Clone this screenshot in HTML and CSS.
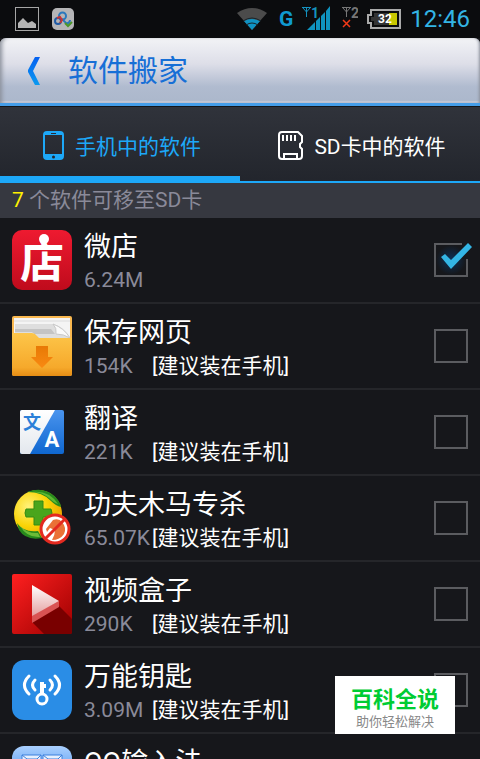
FILE: index.html
```
<!DOCTYPE html>
<html lang="zh-CN">
<head>
    <meta charset="UTF-8">
    <meta name="viewport" content="width=device-width, initial-scale=1.0">
    <title>软件搬家</title>
    <link rel="stylesheet" href="styles.css">
</head>
<body>
    <div class="status-bar">
        <div class="status-left">
            <svg width="24" height="24" viewBox="0 0 24 24">
                <rect x="0.5" y="0.5" width="23" height="23" fill="none" stroke="#a6a6a6"/>
                <path d="M3 21v-5l5-5 5 5 4-2 4 3v4z" fill="#b4b4b4"/>
            </svg>
            <svg width="22" height="22" viewBox="0 0 22 22">
                <rect width="22" height="22" rx="5" fill="#b5b5b7"/>
                <circle cx="10.500" cy="8" r="3.500" fill="none" stroke="#2a78bd" stroke-width="2"/>
                <circle cx="6" cy="13" r="3" fill="none" stroke="#1f5aa5" stroke-width="2"/>
                <path d="M10 11l4 4c2 1 4-1 4-3" fill="none" stroke="#2a78bd" stroke-width="2"/>
                <path d="M5 10l3-1 2 3-2 3" fill="none" stroke="#c73535" stroke-width="2"/>
                <path d="M13 15l3 3 4-4" fill="none" stroke="#4b9628" stroke-width="2"/>
            </svg>
        </div>
        <div class="status-right">
            <svg width="30" height="22" viewBox="0 0 30 22">
                <path d="M15 22L0 5Q15-5 30 5z" fill="#4b4b4b"/>
                <path d="M15 22L7 13q8-4 16 0z" fill="#0f93c4"/>
                <path d="M6 13q9-6 18 0M9 17q6-4 12 0" fill="none" stroke="#17242b" stroke-width="1"/>
            </svg>
            <span class="network">G</span>
            <svg class="signal first" width="28" height="24" viewBox="0 0 28 24">
                <path d="M0 1.500h9M4.500 1v10M1 2l3.500 4L8 2" fill="none" stroke="#1492bf"/>
                <path d="M5 24l8-8v8zM14 24v-9l4-4v13zM19 24V10l4-4v18zM24 24V5l4-5v24z" fill="#0f93bf"/>
                <text x="9" y="12" fill="#1492bf">1</text>
            </svg>
            <svg class="signal" width="16" height="24" viewBox="0 0 16 24">
                <path d="M0 1.500h9M4.500 1v10M1 2l3.500 4L8 2" fill="none" stroke="#777"/>
                <path d="M1 14l7 7M8 14l-7 7" stroke="#f33a18" stroke-width="1.500"/>
                <text x="9" y="12" fill="#777">2</text>
            </svg>
            <svg class="battery" width="34" height="20" viewBox="0 0 34 20">
                <path d="M4 1h29v18H4v-5H1V6h3z" fill="#0b0c0e" stroke="#aaa" stroke-width="2"/>
                <path d="M7 4h15v12H7v-4H4V8h3z" fill="#333"/>
                <path d="M22 4h8v12h-8z" fill="#c8c800"/>
                <text x="18" y="14" text-anchor="middle" fill="#fff">32</text>
            </svg>
            <span class="clock">12:46</span>
        </div>
    </div>

    <header class="header">
        <button class="back" aria-label="返回">
            <svg width="12" height="28" viewBox="0 0 12 28">
                <defs>
                    <linearGradient id="backFill" x1="0" y1="0" x2="0" y2="1">
                        <stop offset="0" stop-color="#0560f0"/>
                        <stop offset="1" stop-color="#0b9af0"/>
                    </linearGradient>
                </defs>
                <path d="M7 0h5L5 14l7 14H7L0 15v-2z" fill="url(#backFill)"/>
            </svg>
        </button>
        <h1>软件搬家</h1>
    </header>

    <nav class="tabs">
        <a href="#phone" class="tab active">
            <svg width="21" height="29" viewBox="0 0 21 29">
                <path d="M4 0h13q4 0 4 4v21q0 4-4 4H4q-4 0-4-4V4q0-4 4-4zM2 4v19h17V4zM8 2v1h5V2z" fill="#1da8f8" fill-rule="evenodd"/>
                <circle cx="10.500" cy="26" r="1.500" fill="#25282f"/>
            </svg>
            <span>手机中的软件</span>
        </a>
        <a href="#sdcard" class="tab">
            <svg width="25" height="29" viewBox="0 0 25 29">
                <path d="M4 1h16l4 4v6l-2 2v3l2 2v7q0 3-3 3H4q-3 0-3-3V4q0-3 3-3zM6 28v-5h13v5" fill="none" stroke="#fff" stroke-width="2"/>
                <path d="M5 4v6M9 4v6M13 4v6M17 4v6" stroke="#fff" stroke-width="2"/>
            </svg>
            <span>SD卡中的软件</span>
        </a>
    </nav>

    <p class="summary"><b>7</b> 个软件可移至SD卡</p>

    <ul class="app-list">
        <li class="app">
            <svg class="app-icon" viewBox="0 0 60 60">
                <defs>
                    <linearGradient id="shopFill" x1="0" y1="0" x2="0" y2="1">
                        <stop offset="0" stop-color="#ee1a30"/>
                        <stop offset="1" stop-color="#bf0b1c"/>
                    </linearGradient>
                </defs>
                <rect width="60" height="60" rx="10" fill="url(#shopFill)"/>
                <text class="shop-text" x="30" y="48" text-anchor="middle" fill="#fff">店</text>
                <circle cx="32" cy="9" r="5" fill="#fff"/>
            </svg>
            <label class="app-info" for="app1">
                <span class="name">微店</span>
                <span class="meta"><span class="size">6.24M</span></span>
            </label>
            <input type="checkbox" id="app1" checked>
        </li>
        <li class="app">
            <svg class="app-icon" viewBox="0 0 60 60">
                <defs>
                    <linearGradient id="folderFill" x1="0" y1="0" x2="0" y2="1">
                        <stop offset="0" stop-color="#fdc64a"/>
                        <stop offset="0.800" stop-color="#f6a92b"/>
                        <stop offset="1" stop-color="#e58c14"/>
                    </linearGradient>
                    <linearGradient id="arrowFill" x1="0" y1="0" x2="0" y2="1">
                        <stop offset="0" stop-color="#e87905"/>
                        <stop offset="1" stop-color="#f98a12"/>
                    </linearGradient>
                </defs>
                <rect width="60" height="60" rx="2" fill="#f9b850"/>
                <path d="M2 2h56v24H2z" fill="#f4f4f4"/>
                <path d="M2 5h56" stroke="#dcdcdc"/>
                <path d="M3 8h38q10 2 17 13v3H26l-4-7H3z" fill="#dedede"/>
                <path d="M3 13h36l4 5H22l-2-2H3z" fill="#c4c4c4"/>
                <path d="M41 8q11 4 17 14-6-4-14-4 1-6-3-10z" fill="#fafafa" stroke="#c9c9c9"/>
                <path d="M0 17h20q3 0 5 3l2 2h33v36q0 2-2 2H2q-2 0-2-2z" fill="url(#folderFill)"/>
                <path d="M24 30h12v11h5L30 52 19 41h5z" fill="url(#arrowFill)"/>
            </svg>
            <label class="app-info" for="app2">
                <span class="name">保存网页</span>
                <span class="meta"><span class="size">154K</span><span class="hint">[建议装在手机]</span></span>
            </label>
            <input type="checkbox" id="app2">
        </li>
        <li class="app">
            <svg class="app-icon" viewBox="0 0 60 60">
                <defs>
                    <linearGradient id="blueFill" x1="0" y1="0" x2="0" y2="1">
                        <stop offset="0" stop-color="#4a94ee"/>
                        <stop offset="1" stop-color="#0f67d0"/>
                    </linearGradient>
                    <linearGradient id="paperFill" x1="0" y1="0" x2="0" y2="1">
                        <stop offset="0" stop-color="#fff"/>
                        <stop offset="1" stop-color="#e3e7ed"/>
                    </linearGradient>
                </defs>
                <rect x="8" y="8" width="44" height="44" rx="2" fill="url(#blueFill)"/>
                <path d="M10 8h33L18 52h-8q-2 0-2-2V10q0-2 2-2z" fill="url(#paperFill)"/>
                <text class="wen-text" x="20" y="27" text-anchor="middle" fill="#2b80d8">文</text>
                <text class="a-text" x="40" y="45" text-anchor="middle" fill="#fff">A</text>
            </svg>
            <label class="app-info" for="app3">
                <span class="name">翻译</span>
                <span class="meta"><span class="size">221K</span><span class="hint">[建议装在手机]</span></span>
            </label>
            <input type="checkbox" id="app3">
        </li>
        <li class="app">
            <svg class="app-icon" viewBox="0 0 60 60">
                <defs>
                    <radialGradient id="ballFill" cx="0.300" cy="0.350" r="0.800">
                        <stop offset="0" stop-color="#fff27a"/>
                        <stop offset="0.500" stop-color="#fad406"/>
                        <stop offset="1" stop-color="#e99c00"/>
                    </radialGradient>
                </defs>
                <circle cx="26" cy="26" r="24" fill="url(#ballFill)"/>
                <path d="M15 4Q34-3 46 12q3 4 3 7-5-1-10-6-8-9-24-9z" fill="#278a1c"/>
                <path d="M20 4q17-2 26 12-4-1-9-6-7-6-17-6z" fill="#5fb933"/>
                <path d="M5 35q7 10 21 8l4 7Q14 53 7 42z" fill="#278a1c"/>
                <path d="M8 38q8 8 18 7l2 4Q15 50 8 38z" fill="#6bbb38"/>
                <path d="M22 13h9v8h8q2 4 0 8h-8v8h-9v-8h-8q-2-4 0-8h8z" fill="#4aa51c" stroke="#358b12"/>
                <circle cx="43" cy="41" r="14" fill="#fff" stroke="#e32a20" stroke-width="3"/>
                <path d="M34 41l7-9q6-2 9 2 5 6 2 12-4 6-12 6 3-5 3-10l-5-2-3 4z" fill="#ea7136"/>
                <path d="M33 51l20-20" stroke="#e32a20" stroke-width="3"/>
            </svg>
            <label class="app-info" for="app4">
                <span class="name">功夫木马专杀</span>
                <span class="meta"><span class="size">65.07K</span><span class="hint">[建议装在手机]</span></span>
            </label>
            <input type="checkbox" id="app4">
        </li>
        <li class="app">
            <svg class="app-icon" viewBox="0 0 60 60">
                <defs>
                    <linearGradient id="videoFill" x1="0" y1="0" x2="1" y2="1">
                        <stop offset="0" stop-color="#ff2020"/>
                        <stop offset="1" stop-color="#9c0000"/>
                    </linearGradient>
                    <linearGradient id="playFill" x1="0" y1="0" x2="0" y2="1">
                        <stop offset="0" stop-color="#fff"/>
                        <stop offset="1" stop-color="#e5a0a0"/>
                    </linearGradient>
                </defs>
                <rect width="60" height="60" rx="2" fill="url(#videoFill)"/>
                <path d="M20 48l27-16 13 13v13q0 2-2 2H32z" fill="#790000"/>
                <path d="M20 41l27-14v6L20 49z" fill="#d95353"/>
                <path d="M20 11l27 16-27 15z" fill="url(#playFill)"/>
            </svg>
            <label class="app-info" for="app5">
                <span class="name">视频盒子</span>
                <span class="meta"><span class="size">290K</span><span class="hint">[建议装在手机]</span></span>
            </label>
            <input type="checkbox" id="app5">
        </li>
        <li class="app">
            <svg class="app-icon" viewBox="0 0 60 60">
                <rect width="60" height="60" rx="12" fill="#2a8de6"/>
                <g fill="none" stroke="#fff" stroke-width="3" stroke-linecap="round">
                    <circle cx="30" cy="39" r="5"/>
                    <path d="M30 34V22M30 26h4" stroke-linecap="butt" stroke-width="4"/>
                    <path d="M23 20q-5 5 0 10M17 16q-9 9 0 18M38 20q5 5 0 10M43 16q9 9 0 18"/>
                </g>
            </svg>
            <label class="app-info" for="app6">
                <span class="name">万能钥匙</span>
                <span class="meta"><span class="size">3.09M</span><span class="hint">[建议装在手机]</span></span>
            </label>
            <input type="checkbox" id="app6">
        </li>
        <li class="app">
            <svg class="app-icon" viewBox="0 0 60 60">
                <defs>
                    <linearGradient id="keysFill" x1="0" y1="0" x2="0" y2="1">
                        <stop offset="0" stop-color="#a9d0ff"/>
                        <stop offset="0.500" stop-color="#5598ee"/>
                    </linearGradient>
                </defs>
                <rect width="60" height="60" rx="12" fill="url(#keysFill)"/>
                <path d="M10 9h19v16H10zM31 9h19v16H31z" fill="#e5f0ff" stroke="#3d80dd"/>
                <path d="M10 9l5 4h10l4-4M31 9l5 4h10l4-4" fill="none" stroke="#3d80dd"/>
            </svg>
            <label class="app-info" for="app7">
                <span class="name">QQ输入法</span>
            </label>
            <input type="checkbox" id="app7">
        </li>
    </ul>

    <div class="watermark">
        <strong>百科全说</strong>
        <small>助你轻松解决</small>
    </div>
</body>
</html>
```
FILE: styles.css
```
* {
    box-sizing: border-box;
}
body {
    margin: 0;
    height: 100vh;
    overflow: hidden;
    background-color: #16171b;
    color: #fff;
    font-family: Roboto, "Noto Sans CJK SC", sans-serif;
}
svg {
    display: block;
    flex-shrink: 0;
}
/* Status bar */
.status-bar {
    display: flex;
    justify-content: space-between;
    align-items: center;
    height: 38px;
    padding: 0 10px 0 15px;
    background-color: #0b0c0e;
}
.status-left {
    display: flex;
    align-items: center;
    gap: 13px;
}
.status-right {
    display: flex;
    align-items: center;
    gap: 9px;
}
.network {
    margin-left: 3px;
    color: #0f9ad0;
    font-size: 21px;
    font-weight: bold;
}
.signal {
    margin-bottom: 12px;
    margin-top: 10px;
}
.signal.first {
    margin-right: 3px;
}
.signal text {
    font-size: 14px;
    font-weight: bold;
}
.battery text {
    font-size: 12px;
    font-weight: bold;
}
.clock {
    color: #33b5e5;
    font-size: 24px;
}
/* Title bar */
.header {
    display: flex;
    align-items: center;
    gap: 28px;
    height: 68px;
    padding: 0 28px;
    border-bottom: 3px solid #459de8;
    border-radius: 6px 6px 0 0;
    background: linear-gradient(#f2f3f6, #dddee8 40%, #b0bbcf 75%, #acb8cc 96%, #c6cad8 97%);
    box-shadow: inset 4px 0 4px -2px #8b909b, inset -3px 0 3px -2px #8b909b;
}
.back {
    padding: 0;
    border: none;
    background: none;
    cursor: pointer;
}
.header h1 {
    margin: 0;
    color: #176fd6;
    font-size: 30px;
    font-weight: normal;
    line-height: 36px;
}
/* Tabs */
.tabs {
    display: flex;
    height: 77px;
    border-top: 1px solid #14161a;
    background: linear-gradient(#30333b, #22252c);
}
.tab {
    display: flex;
    flex: 1;
    justify-content: center;
    align-items: center;
    gap: 11px;
    padding-left: 4px;
    box-shadow: inset 0 -2px #1da8f8;
    color: #fff;
    font-size: 21px;
    text-decoration: none;
}
.tab.active {
    box-shadow: inset 0 -7px #1da8f8;
    color: #1da8f8;
}
.summary {
    height: 35px;
    margin: 0;
    padding: 0 12px;
    background-color: #363840;
    color: #8a8a99;
    font-size: 21px;
    line-height: 35px;
}
.summary b {
    color: #fff000;
    font-weight: normal;
}
/* App list */
.app-list {
    margin: 0;
    padding: 0;
    list-style: none;
}
.app {
    display: flex;
    align-items: center;
    gap: 12px;
    height: 86px;
    padding: 0 12px;
    border-bottom: 2px solid #25262a;
}
.app-icon {
    width: 60px;
    height: 60px;
    font-family: "Noto Sans CJK SC", sans-serif;
    font-weight: bold;
}
.shop-text {
    font-size: 44px;
}
.wen-text {
    font-size: 18px;
}
.a-text {
    font-family: Roboto, sans-serif;
    font-size: 22px;
}
.app-info {
    flex: 1;
    align-self: flex-start;
    padding-top: 12px;
}
.name {
    display: block;
    font-size: 27px;
    line-height: 34px;
}
.meta {
    display: grid;
    grid-template-columns: 68px 1fr;
    font-size: 21px;
    line-height: 32px;
}
.size {
    color: #8a8a99;
}
/* Check boxes */
.app input {
    appearance: none;
    position: relative;
    width: 34px;
    height: 34px;
    margin: 0;
    border: 2px solid #5b5c60;
    cursor: pointer;
}
.app input:checked::before {
    content: "";
    position: absolute;
    top: -2px;
    right: -2px;
    width: 6px;
    height: 16px;
    background-color: #16171b;
}
.app input:checked {
    background: radial-gradient(#0d3158, #16171b 70%);
}
.app input:checked::after {
    content: "";
    position: absolute;
    top: -2px;
    left: -2px;
    width: 38px;
    height: 26px;
    background-color: #33b5e5;
    clip-path: polygon(7px 14px, 11px 11px, 17px 17px, 34px 0, 38px 4px, 17px 26px);
}
.watermark {
    position: absolute;
    right: 25px;
    bottom: 25px;
    padding: 10px 16px 4px;
    background-color: #fff;
    text-align: center;
}
.watermark strong {
    display: block;
    color: #0c3;
    font-size: 22px;
    line-height: 28px;
}
.watermark small {
    display: block;
    color: #888;
    font-size: 13px;
    line-height: 16px;
}
```
